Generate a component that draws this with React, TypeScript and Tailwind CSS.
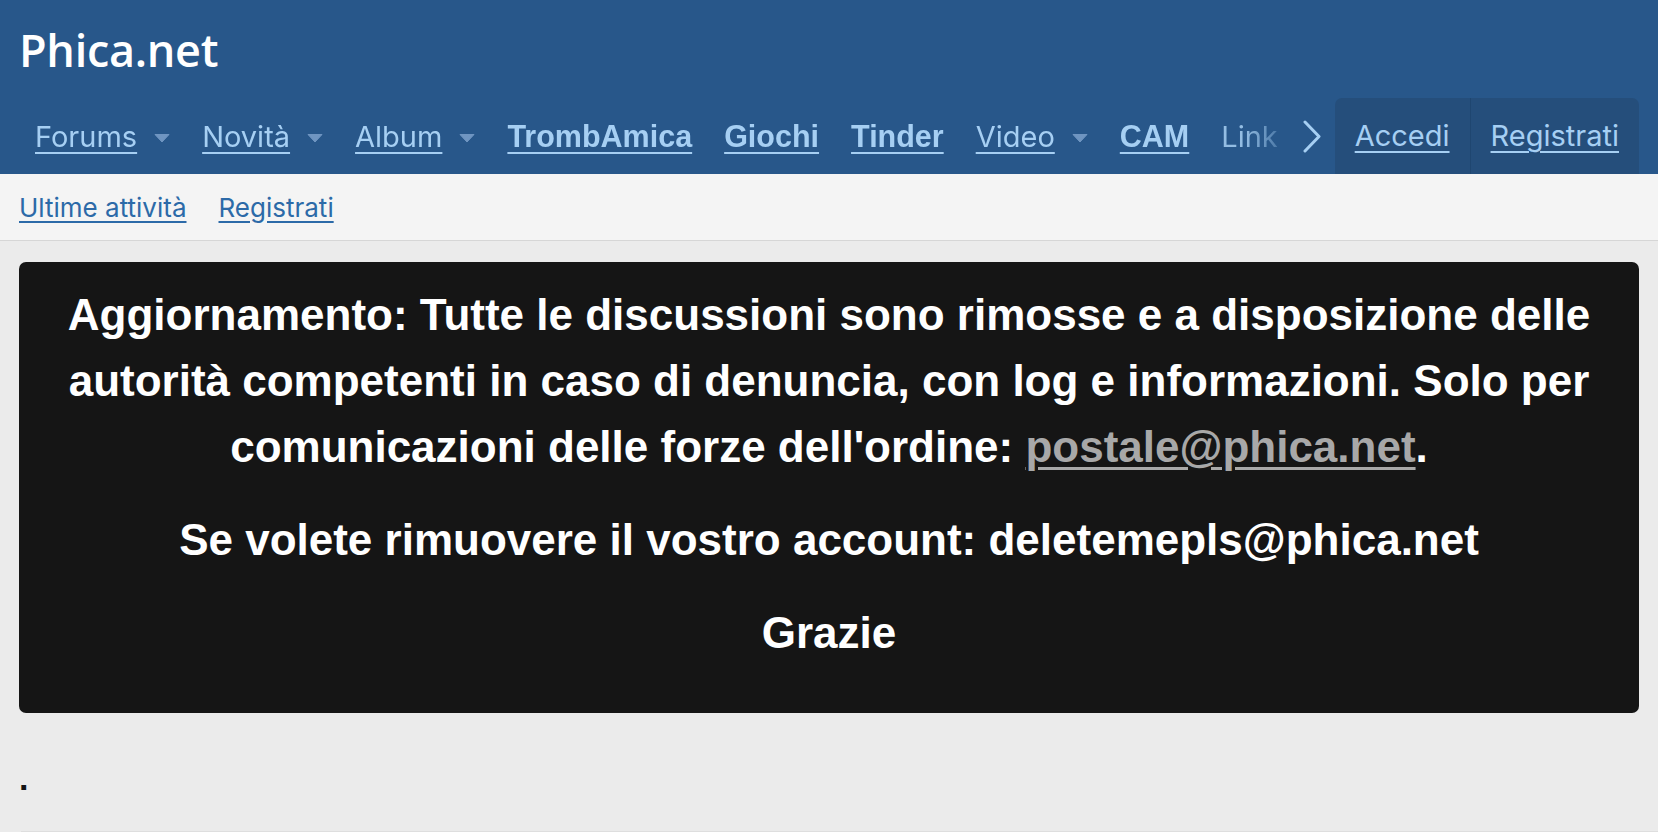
import React from "react";

type NavItem = { label: string; bold?: boolean; caret?: boolean; fade?: boolean };

const navItems: NavItem[] = [
  { label: "Forums", caret: true },
  { label: "Novità", caret: true },
  { label: "Album", caret: true },
  { label: "TrombAmica", bold: true },
  { label: "Giochi", bold: true },
  { label: "Tinder", bold: true },
  { label: "Video", caret: true },
  { label: "CAM", bold: true },
  { label: "Link", fade: true },
];

const Caret: React.FC = () => (
  <svg width="16" height="10" viewBox="0 0 16 10" className="ml-[17px] self-center mt-[2px]">
    <path d="M1 1.5 H15 L8 9 Z" fill="#6f95c1" stroke="#6f95c1" strokeWidth="1" strokeLinejoin="round" />
  </svg>
);

const App: React.FC = () => {
  return (
    <div className="min-h-screen bg-[#ebebeb] font-['Inter',sans-serif]">
      {/* header */}
      <header className="bg-[#28578a]">
        <div className="h-[98px] flex items-center px-[19px]">
          <span className="font-['Open_Sans',sans-serif] font-semibold text-[45px] leading-none text-white tracking-[-0.3px]">
            Phica.net
          </span>
        </div>
        <div className="h-[76px] flex items-stretch pl-[19px] pr-[19px]">
          <nav className="flex-1 min-w-0 overflow-hidden flex items-center [mask-image:linear-gradient(to_left,transparent_0px,black_50px)]">
            <div className="flex items-baseline">
              {navItems.map((item, index) => (
                <a
                  key={index}
                  href="#"
                  className={`shrink-0 flex items-baseline px-[16px] leading-[36px] ${
                    item.bold
                      ? "font-['Liberation_Sans',Arial,sans-serif] font-bold text-[30.5px]"
                      : "font-['Inter',sans-serif] text-[29px]"
                  } ${item.fade ? "text-[#94bde3]" : "text-[#a6cff3]"}`}
                >
                  <span className={item.fade ? "" : "underline underline-offset-[5px] decoration-[2px]"}>
                    {item.label}
                  </span>
                  {item.caret && <Caret />}
                </a>
              ))}
            </div>
          </nav>
          <div className="w-[40px] pr-[6px] flex items-center justify-center">
            <svg width="20" height="33" viewBox="0 0 20 33">
              <polyline points="3,2 17,16.5 3,31" fill="none" stroke="#a6cff3" strokeWidth="3" strokeLinecap="round" strokeLinejoin="round" />
            </svg>
          </div>
          <div className="self-end h-[76px] flex bg-[#254e7b] rounded-t-[7px]">
            <a href="#" className="flex items-center px-[20px] text-[29px] text-[#a6cff3] underline underline-offset-[5px] decoration-[2px] border-r border-[#1f4670]">
              Accedi
            </a>
            <a href="#" className="flex items-center px-[20px] text-[29px] text-[#a6cff3] underline underline-offset-[5px] decoration-[2px]">
              Registrati
            </a>
          </div>
        </div>
      </header>

      {/* sub nav */}
      <div className="h-[67px] bg-[#f4f4f4] border-b border-[#d6d6d6] flex items-center px-[19px] gap-[32px]">
        <a href="#" className="text-[26px] text-[#2c6aa8] underline underline-offset-[4px]">
          Ultime attività
        </a>
        <a href="#" className="text-[26px] text-[#2c6aa8] underline underline-offset-[4px]">
          Registrati
        </a>
      </div>

      {/* notice */}
      <div className="px-[19px] pt-[21px]">
        <div className="bg-[#151515] rounded-[7px] px-[20px] pt-[20px] pb-[20px] text-center text-white font-['Liberation_Sans',Arial,sans-serif] font-bold text-[44px] leading-[66px]">
          <p className="mb-[27px]">
            Aggiornamento: Tutte le discussioni sono rimosse e a disposizione delle autorità competenti in caso di
            denuncia, con log e informazioni. Solo per comunicazioni delle forze dell'ordine:{" "}
            <a href="#" className="text-[#a8a8a8] underline underline-offset-[5px] decoration-[3px]">
              postale@phica.net
            </a>
            .
          </p>
          <p className="mb-[27px]">Se volete rimuovere il vostro account: deletemepls@phica.net</p>
          <p className="mb-[27px]">Grazie</p>
        </div>
      </div>

      <div className="px-[19px] pt-[47px] h-[118px] text-[34px] leading-[36px] text-[#141414] font-['Liberation_Sans',Arial,sans-serif] font-bold">
        .
      </div>
      <div className="ml-[21px] border-t border-[#dedede] h-[10px]" />
    </div>
  );
};

export default App;
